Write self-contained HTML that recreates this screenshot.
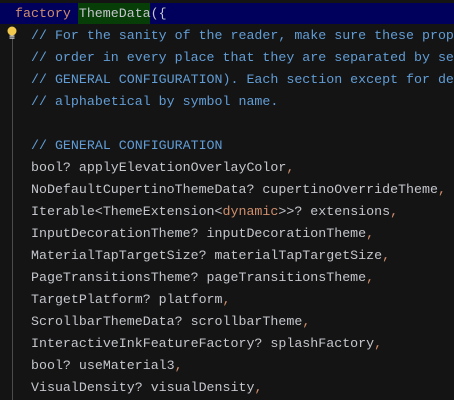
<!DOCTYPE html>
<html><head><style>
html,body{margin:0;width:454px;height:400px;overflow:hidden}
body{background:#141414;position:relative;font-family:"Liberation Mono","DejaVu Sans Mono",monospace;font-size:13.3px;color:#c4c6cc}
.wrap{position:absolute;left:0;top:0;width:454px;height:400px;overflow:hidden}
.bar{position:absolute;left:0;top:3px;width:454px;height:21px;background:#00005c}
.hl{position:absolute;left:78px;top:3px;width:72px;height:21px;background:#073d07}
.l{position:absolute;left:31px;height:22px;line-height:22px;white-space:pre}
.c{color:#629dd6}.k{color:#cf8e6d}
.g{position:absolute;left:12px;top:38px;width:1px;height:362px;background:#4a4b4f}
</style></head><body><div class="wrap">
<div class="bar"></div><div class="hl"></div>
<div class="l" style="left:15px;top:3px;line-height:21px"><span class="k">factory</span> ThemeData({</div>
<div class="g"></div>
<svg style="position:absolute;left:6px;top:26px" width="12" height="14"><circle cx="6" cy="5" r="4.5" fill="#f2c94c"/><rect x="3.5" y="9.5" width="5" height="1.2" fill="#ddd"/><rect x="3.5" y="11.5" width="5" height="1.2" fill="#ddd"/></svg>
<div class="l c" style="top:25px">// For the sanity of the reader, make sure these properties are in the same</div>
<div class="l c" style="top:47px">// order in every place that they are separated by section comments (e.g.</div>
<div class="l c" style="top:69px">// GENERAL CONFIGURATION). Each section except for deprecations should be</div>
<div class="l c" style="top:91px">// alphabetical by symbol name.</div>
<div class="l c" style="top:135px">// GENERAL CONFIGURATION</div>
<div class="l" style="top:157px">bool? applyElevationOverlayColor<span class="k">,</span></div>
<div class="l" style="top:179px">NoDefaultCupertinoThemeData? cupertinoOverrideTheme<span class="k">,</span></div>
<div class="l" style="top:201px">Iterable&lt;ThemeExtension&lt;<span class="k">dynamic</span>&gt;&gt;? extensions<span class="k">,</span></div>
<div class="l" style="top:223px">InputDecorationTheme? inputDecorationTheme<span class="k">,</span></div>
<div class="l" style="top:245px">MaterialTapTargetSize? materialTapTargetSize<span class="k">,</span></div>
<div class="l" style="top:267px">PageTransitionsTheme? pageTransitionsTheme<span class="k">,</span></div>
<div class="l" style="top:289px">TargetPlatform? platform<span class="k">,</span></div>
<div class="l" style="top:311px">ScrollbarThemeData? scrollbarTheme<span class="k">,</span></div>
<div class="l" style="top:333px">InteractiveInkFeatureFactory? splashFactory<span class="k">,</span></div>
<div class="l" style="top:355px">bool? useMaterial3<span class="k">,</span></div>
<div class="l" style="top:377px">VisualDensity? visualDensity<span class="k">,</span></div>
</div></body></html>
